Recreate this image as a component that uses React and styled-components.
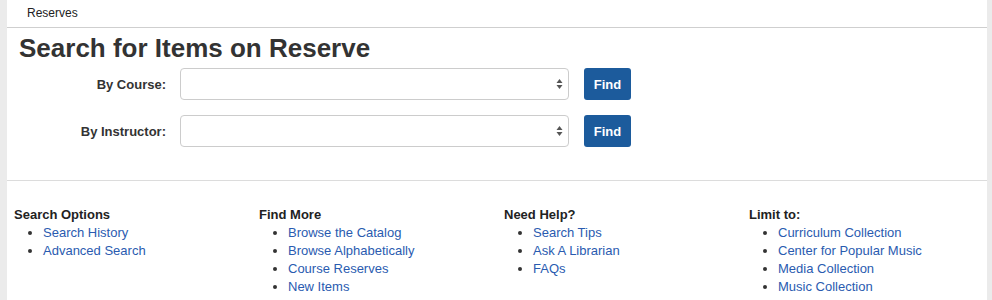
import styled, { createGlobalStyle } from "styled-components";

const GlobalStyle = createGlobalStyle`
  body {
    margin: 0;
    background: #ebebeb;
    font-family: "Liberation Sans", Arial, sans-serif;
    color: #333;
  }
`;

const Page = styled.div`
  background: #fff;
  margin: 0 5px 0 7px;
  height: 300px;
  overflow: hidden;
`;

const Breadcrumb = styled.div`
  height: 28px;
  border-bottom: 1px solid #cfcfcf;
  box-sizing: border-box;
  padding: 6px 0 0 20px;
  font-size: 12px;
  color: #222;
`;

const Main = styled.div`
  padding: 4px 12px 0;
  height: 148px;
  border-bottom: 1px solid #dcdcdc;
`;

const Title = styled.h1`
  margin: 0 0 4px;
  font-size: 26px;
  font-weight: bold;
  line-height: 32px;
  color: #333;
`;

const Form = styled.div`
  display: flex;
  flex-direction: column;
  gap: 15px;
`;

const Row = styled.div`
  display: flex;
  align-items: center;
`;

const Label = styled.label`
  width: 147px;
  text-align: right;
  font-size: 13px;
  font-weight: bold;
  margin-right: 14px;
`;

const Select = styled.div`
  width: 389px;
  height: 32px;
  box-sizing: border-box;
  border: 1px solid #ccc;
  border-radius: 4px;
  display: flex;
  align-items: center;
  justify-content: flex-end;
  padding-right: 5px;
  margin-right: 15px;
`;

const FindButton = styled.button`
  width: 47px;
  height: 32px;
  border: none;
  border-radius: 3px;
  background: #1c5b9c;
  color: #fff;
  font-family: "Liberation Sans", Arial, sans-serif;
  font-size: 13px;
  font-weight: bold;
  padding: 0;
`;

const Footer = styled.div`
  display: grid;
  grid-template-columns: repeat(4, 245px);
  padding: 25px 7px 0;
`;

const Heading = styled.div`
  font-size: 13px;
  font-weight: bold;
  line-height: 18px;
  color: #222;
`;

const List = styled.ul`
  margin: 0;
  padding-left: 29px;
  font-size: 13px;
  line-height: 18px;
  list-style: disc;
`;

const Link = styled.a`
  color: #2a5bb0;
  text-decoration: none;
`;

const Arrows = () => (
  <svg width="7" height="12" viewBox="0 0 7 12">
    <path d="M3.5 1 L6.5 5 H0.5 Z" fill="#555" />
    <path d="M3.5 11 L6.5 7 H0.5 Z" fill="#555" />
  </svg>
);

const columns = [
  { title: "Search Options", links: ["Search History", "Advanced Search"] },
  {
    title: "Find More",
    links: ["Browse the Catalog", "Browse Alphabetically", "Course Reserves", "New Items"],
  },
  { title: "Need Help?", links: ["Search Tips", "Ask A Librarian", "FAQs"] },
  {
    title: "Limit to:",
    links: ["Curriculum Collection", "Center for Popular Music", "Media Collection", "Music Collection"],
  },
];

export default function App() {
  return (
    <>
      <GlobalStyle />
      <Page>
        <Breadcrumb>Reserves</Breadcrumb>
        <Main>
          <Title>Search for Items on Reserve</Title>
          <Form>
            {["By Course:", "By Instructor:"].map((label) => (
              <Row key={label}>
                <Label>{label}</Label>
                <Select>
                  <Arrows />
                </Select>
                <FindButton>Find</FindButton>
              </Row>
            ))}
          </Form>
        </Main>
        <Footer>
          {columns.map((col) => (
            <div key={col.title}>
              <Heading>{col.title}</Heading>
              <List>
                {col.links.map((l) => (
                  <li key={l}>
                    <Link href="#">{l}</Link>
                  </li>
                ))}
              </List>
            </div>
          ))}
        </Footer>
      </Page>
    </>
  );
}
